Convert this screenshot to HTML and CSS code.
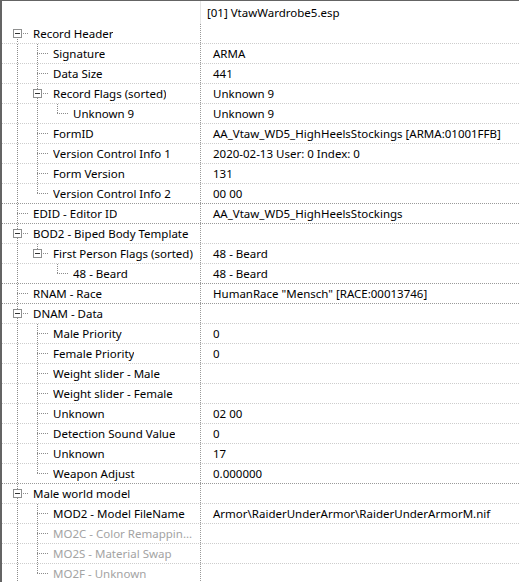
FILE: index.html
```html
<!DOCTYPE html>
<html lang="en">
<head>
    <meta charset="UTF-8">
    <title>Record View</title>
    <link rel="stylesheet" href="styles.css">
</head>
<body>
    <div class="tree">
        <!-- Column header -->
        <div class="head">
            <div class="head-label"></div>
            <div class="head-file">[01] VtawWardrobe5.esp</div>
        </div>

        <!-- Record Header -->
        <div class="row">
            <div class="label"><span class="g link first"><span class="box"></span></span><span class="name">Record Header</span></div>
            <div class="value"></div>
        </div>
        <div class="row">
            <div class="label"><span class="g pipe"></span><span class="g link tee"></span><span class="name">Signature</span></div>
            <div class="value">ARMA</div>
        </div>
        <div class="row">
            <div class="label"><span class="g pipe"></span><span class="g link tee"></span><span class="name">Data Size</span></div>
            <div class="value">441</div>
        </div>
        <div class="row">
            <div class="label"><span class="g pipe"></span><span class="g link tee"><span class="box"></span></span><span class="name">Record Flags (sorted)</span></div>
            <div class="value">Unknown 9</div>
        </div>
        <div class="row">
            <div class="label"><span class="g pipe"></span><span class="g pipe"></span><span class="g link end"></span><span class="name">Unknown 9</span></div>
            <div class="value">Unknown 9</div>
        </div>
        <div class="row">
            <div class="label"><span class="g pipe"></span><span class="g link tee"></span><span class="name">FormID</span></div>
            <div class="value">AA_Vtaw_WD5_HighHeelsStockings [ARMA:01001FFB]</div>
        </div>
        <div class="row">
            <div class="label"><span class="g pipe"></span><span class="g link tee"></span><span class="name">Version Control Info 1</span></div>
            <div class="value">2020-02-13 User: 0 Index: 0</div>
        </div>
        <div class="row">
            <div class="label"><span class="g pipe"></span><span class="g link tee"></span><span class="name">Form Version</span></div>
            <div class="value">131</div>
        </div>
        <div class="row group-end">
            <div class="label"><span class="g pipe"></span><span class="g link end"></span><span class="name">Version Control Info 2</span></div>
            <div class="value">00 00</div>
        </div>

        <!-- EDID -->
        <div class="row group-end">
            <div class="label"><span class="g link tee"></span><span class="name">EDID - Editor ID</span></div>
            <div class="value">AA_Vtaw_WD5_HighHeelsStockings</div>
        </div>

        <!-- BOD2 -->
        <div class="row">
            <div class="label"><span class="g link tee"><span class="box"></span></span><span class="name">BOD2 - Biped Body Template</span></div>
            <div class="value"></div>
        </div>
        <div class="row">
            <div class="label"><span class="g pipe"></span><span class="g link end"><span class="box"></span></span><span class="name">First Person Flags (sorted)</span></div>
            <div class="value">48 - Beard</div>
        </div>
        <div class="row group-end">
            <div class="label"><span class="g pipe"></span><span class="g"></span><span class="g link end"></span><span class="name">48 - Beard</span></div>
            <div class="value">48 - Beard</div>
        </div>

        <!-- RNAM -->
        <div class="row group-end">
            <div class="label"><span class="g link tee"></span><span class="name">RNAM - Race</span></div>
            <div class="value">HumanRace "Mensch" [RACE:00013746]</div>
        </div>

        <!-- DNAM -->
        <div class="row">
            <div class="label"><span class="g link tee"><span class="box"></span></span><span class="name">DNAM - Data</span></div>
            <div class="value"></div>
        </div>
        <div class="row">
            <div class="label"><span class="g pipe"></span><span class="g link tee"></span><span class="name">Male Priority</span></div>
            <div class="value">0</div>
        </div>
        <div class="row">
            <div class="label"><span class="g pipe"></span><span class="g link tee"></span><span class="name">Female Priority</span></div>
            <div class="value">0</div>
        </div>
        <div class="row">
            <div class="label"><span class="g pipe"></span><span class="g link tee"></span><span class="name">Weight slider - Male</span></div>
            <div class="value"></div>
        </div>
        <div class="row">
            <div class="label"><span class="g pipe"></span><span class="g link tee"></span><span class="name">Weight slider - Female</span></div>
            <div class="value"></div>
        </div>
        <div class="row">
            <div class="label"><span class="g pipe"></span><span class="g link tee"></span><span class="name">Unknown</span></div>
            <div class="value">02 00</div>
        </div>
        <div class="row">
            <div class="label"><span class="g pipe"></span><span class="g link tee"></span><span class="name">Detection Sound Value</span></div>
            <div class="value">0</div>
        </div>
        <div class="row">
            <div class="label"><span class="g pipe"></span><span class="g link tee"></span><span class="name">Unknown</span></div>
            <div class="value">17</div>
        </div>
        <div class="row group-end">
            <div class="label"><span class="g pipe"></span><span class="g link end"></span><span class="name">Weapon Adjust</span></div>
            <div class="value">0.000000</div>
        </div>

        <!-- Male world model -->
        <div class="row">
            <div class="label"><span class="g link tee"><span class="box"></span></span><span class="name">Male world model</span></div>
            <div class="value"></div>
        </div>
        <div class="row">
            <div class="label"><span class="g pipe"></span><span class="g link tee"></span><span class="name">MOD2 - Model FileName</span></div>
            <div class="value">Armor\RaiderUnderArmor\RaiderUnderArmorM.nif</div>
        </div>
        <div class="row empty">
            <div class="label"><span class="g pipe"></span><span class="g link tee"></span><span class="name">MO2C - Color Remappin...</span></div>
            <div class="value"></div>
        </div>
        <div class="row empty">
            <div class="label"><span class="g pipe"></span><span class="g link tee"></span><span class="name">MO2S - Material Swap</span></div>
            <div class="value"></div>
        </div>
        <div class="row empty">
            <div class="label"><span class="g pipe"></span><span class="g link end"></span><span class="name">MO2F - Unknown</span></div>
            <div class="value"></div>
        </div>
    </div>
</body>
</html>
```

FILE: styles.css
```css
* {
    box-sizing: border-box;
}

body {
    margin: 0;
    background: #fff;
    font-family: "Noto Sans", "Open Sans", sans-serif;
    font-size: 11.5px;
    color: #000;
}

.tree {
    height: 100vh;
    overflow: hidden;
    border-top: 1px solid #646464;
    border-left: 2px solid #646464;
}

/* Column header */
.head {
    display: flex;
    height: 23px;
}

.head-label {
    width: 199px;
    flex: none;
    border-right: 1px solid #e5e5e5;
}

.head-file {
    padding: 1px 0 0 6px;
    line-height: 22px;
    white-space: nowrap;
}

/* Tree rows */
.row {
    display: flex;
    height: 20px;
    border-bottom: 1px dotted #cdcdcd;
}

.row.group-end {
    border-bottom-color: #9a9a9a;
}

.label {
    width: 199px;
    flex: none;
    display: flex;
    padding: 0 4px 0 5px;
    border-right: 1px dotted #9a9a9a;
    overflow: hidden;
}

.name {
    margin-left: 4px;
    line-height: 19px;
    white-space: nowrap;
    overflow: hidden;
    text-overflow: ellipsis;
}

.value {
    flex: 1;
    padding-left: 12px;
    line-height: 19px;
    white-space: nowrap;
    overflow: hidden;
}

.row.empty .name {
    color: #a3a3a3;
}

/* Tree guide lines: one 20px cell per level, the last one also carries the connector */
.g {
    width: 20px;
    height: 19px;
    flex: none;
}

.g.link {
    width: 22px;
}

.pipe {
    background: repeating-linear-gradient(#8c8c8c 0 1px, transparent 1px 2px) 10px 0 / 1px 100% no-repeat;
}

.tee {
    background:
        repeating-linear-gradient(90deg, #8c8c8c 0 1px, transparent 1px 2px) 10px 9px / 12px 1px no-repeat,
        repeating-linear-gradient(#8c8c8c 0 1px, transparent 1px 2px) 10px 0 / 1px 100% no-repeat;
}

.end {
    background:
        repeating-linear-gradient(90deg, #8c8c8c 0 1px, transparent 1px 2px) 10px 9px / 12px 1px no-repeat,
        repeating-linear-gradient(#8c8c8c 0 1px, transparent 1px 2px) 10px 0 / 1px 10px no-repeat;
}

.first {
    background:
        repeating-linear-gradient(90deg, #8c8c8c 0 1px, transparent 1px 2px) 10px 9px / 12px 1px no-repeat,
        repeating-linear-gradient(#8c8c8c 0 1px, transparent 1px 2px) 10px 9px / 1px 10px no-repeat;
}

/* Expand / collapse box */
.box {
    display: block;
    width: 9px;
    height: 9px;
    margin: 5px 0 0 6px;
    border: 1px solid #8e8f8f;
    background: linear-gradient(#333, #333) center / 5px 1px no-repeat, #fff;
}
```
